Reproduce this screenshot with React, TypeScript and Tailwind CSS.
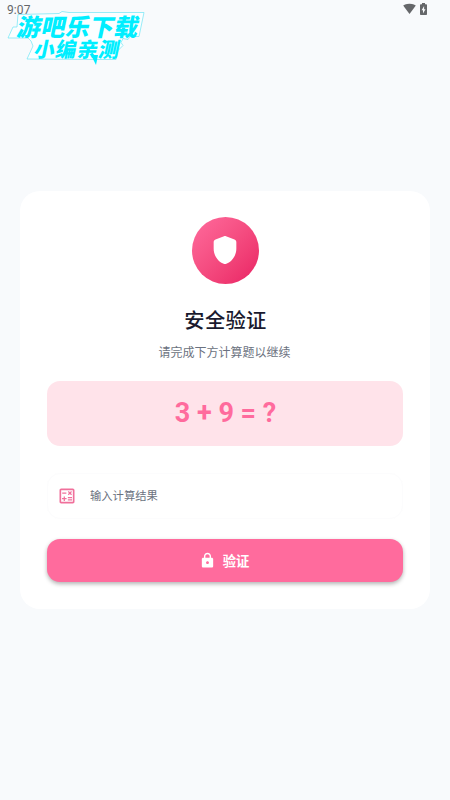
import React, { useState } from 'react'

interface IconProps {
  className?: string
}

const ShieldIcon: React.FC<IconProps> = ({ className }) => (
  <svg viewBox="0 0 24 24" fill="currentColor" className={className}>
    <path d="M11.3 2.26l-6 2.25C4.52 4.81 4 5.55 4 6.39v4.7c0 4.83 3.13 9.37 7.43 10.75.37.12.77.12 1.14 0C16.87 20.46 20 15.93 20 11.09v-4.7c0-.83-.52-1.58-1.3-1.87l-6-2.25c-.45-.17-.95-.17-1.4-.01z" />
  </svg>
)

const CalculateIcon: React.FC<IconProps> = ({ className }) => (
  <svg viewBox="0 0 24 24" fill="currentColor" className={className}>
    <path d="M19 3H5c-1.1 0-2 .9-2 2v14c0 1.1.9 2 2 2h14c1.1 0 2-.9 2-2V5c0-1.1-.9-2-2-2zm0 16H5V5h14v14z" />
    <path d="M6.25 7.72h5v1.5h-5zM13 15.75h5v1.5h-5zM13 13.25h5v1.5h-5zM8 18h1.5v-2h2v-1.5h-2v-2H8v2H6V16h2zM14.09 10.95l1.41-1.41 1.41 1.41 1.06-1.06-1.41-1.42 1.41-1.41L16.91 6 15.5 7.41 14.09 6l-1.06 1.06 1.41 1.41-1.41 1.42z" />
  </svg>
)

const LockIcon: React.FC<IconProps> = ({ className }) => (
  <svg viewBox="0 0 24 24" fill="currentColor" className={className}>
    <path d="M18 8h-1V6c0-2.76-2.24-5-5-5S7 3.24 7 6v2H6c-1.1 0-2 .9-2 2v10c0 1.1.9 2 2 2h12c1.1 0 2-.9 2-2V10c0-1.1-.9-2-2-2zm-6 9c-1.1 0-2-.9-2-2s.9-2 2-2 2 .9 2 2-.9 2-2 2zM9 8V6c0-1.66 1.34-3 3-3s3 1.34 3 3v2H9z" />
  </svg>
)

const StatusBar: React.FC = () => (
  <div className="flex h-[19px] items-center justify-between pl-[7px] pr-[23px] pt-px text-[#65676a]">
    <span className="text-[12px] leading-none tracking-[0.1px]">9:07</span>
    <div className="flex items-center gap-[4px] pb-[3px]">
      <svg viewBox="0 0 24 20" fill="currentColor" className="h-[11px] w-[13px]">
        <path d="M12 20 .3 4.6C1 4 5.2 1 12 1s11 3 11.7 3.6z" />
      </svg>
      <svg viewBox="0 0 14 24" fill="currentColor" className="h-[12px] w-[7px]">
        <path
          fillRule="evenodd"
          d="M4 0h6v2.5h2.5c.8 0 1.5.7 1.5 1.5v18.5c0 .8-.7 1.5-1.5 1.5h-11C.7 24 0 23.3 0 22.5V4c0-.8.7-1.5 1.5-1.5H4zm4.200 6-5 8.500H6V21l5-8.500H8.200z"
        />
      </svg>
    </div>
  </div>
)

const Watermark: React.FC = () => (
  <div className="absolute left-0 top-0 h-[70px] w-[160px] font-['Noto_Sans_CJK_SC',sans-serif] font-black text-[#00eeff]">
    <svg viewBox="0 0 160 70" fill="none" className="absolute inset-0 h-full w-full">
      <path
        d="M18 14.500l41-1 3-2 7 1h75l-5 24h-9l-2 3-5-1-2 4 2 3-5 5-2 9H98l-71-.5 6-13-2-5-3-3H8l5-11h4z"
        fill="#fbfeff"
        stroke="#6fe5f5"
        strokeWidth=".7"
      />
      <path d="M91 55h7l-2 10z" fill="currentColor" />
    </svg>
    <span className="absolute left-[18px] top-[14px] -skew-x-12 whitespace-nowrap text-[24px] leading-[24px] tracking-[0.3px]">
      游吧乐下载
    </span>
    <span className="absolute left-[35px] top-[38px] -skew-x-12 whitespace-nowrap text-[20.500px] leading-[20px] tracking-[1px]">
      小编亲测
    </span>
  </div>
)

const App: React.FC = () => {
  const [answer, setAnswer] = useState('')

  return (
    <div className="relative flex h-[800px] w-[450px] flex-col overflow-hidden bg-[#f8fafc] font-[Roboto,'Noto_Sans_CJK_SC',sans-serif]">
      <StatusBar />
      <Watermark />

      <main className="mx-5 mt-[171.5px] flex h-[418.5px] flex-col rounded-[20px] bg-white px-[27px] pt-[27px]">
        <div className="mx-auto -mt-px flex size-[67px] shrink-0 items-center justify-center rounded-full bg-linear-to-br from-[#ff6b9d] to-[#e91e63] text-white">
          <ShieldIcon className="size-[34px]" />
        </div>

        <h1 className="mt-[22px] pl-px text-center text-[20.300px] font-medium leading-[30px] tracking-[0.3px] text-[#1a1a2e]">
          安全验证
        </h1>
        <p className="mt-[7px] pr-px text-center text-[12px] leading-[20px] text-[#6b7280]">
          请完成下方计算题以继续
        </p>

        <div className="mt-[18px] flex h-[65px] shrink-0 items-center justify-center rounded-[13px] bg-[#ffe3ea] pl-px pt-px text-[27px] font-bold text-[#ff6b9d]">
          3 + 9 = ?
        </div>

        <label className="mt-[27px] flex h-[46px] shrink-0 items-center rounded-[13px] border border-[#fcfcfd] bg-white pl-[9px]">
          <CalculateIcon className="size-5 text-[#f0709b]" />
          <input
            value={answer}
            onChange={(e) => setAnswer(e.target.value)}
            placeholder="输入计算结果"
            className="ml-[13px] w-[280px] pt-1 text-[11.3px] outline-none placeholder:text-[#6b7280]"
          />
        </label>

        <button className="mt-5 flex h-[43.5px] shrink-0 items-center justify-center gap-[7px] rounded-[13px] bg-[#ff6b9d] pr-0.5 pt-px text-[13.3px] font-bold text-white shadow-[0_2px_4px_rgba(0,0,0,0.3)]">
          <LockIcon className="size-[17px]" />
          <span className="pt-[3px]">验证</span>
        </button>
      </main>
    </div>
  )
}

export default App
